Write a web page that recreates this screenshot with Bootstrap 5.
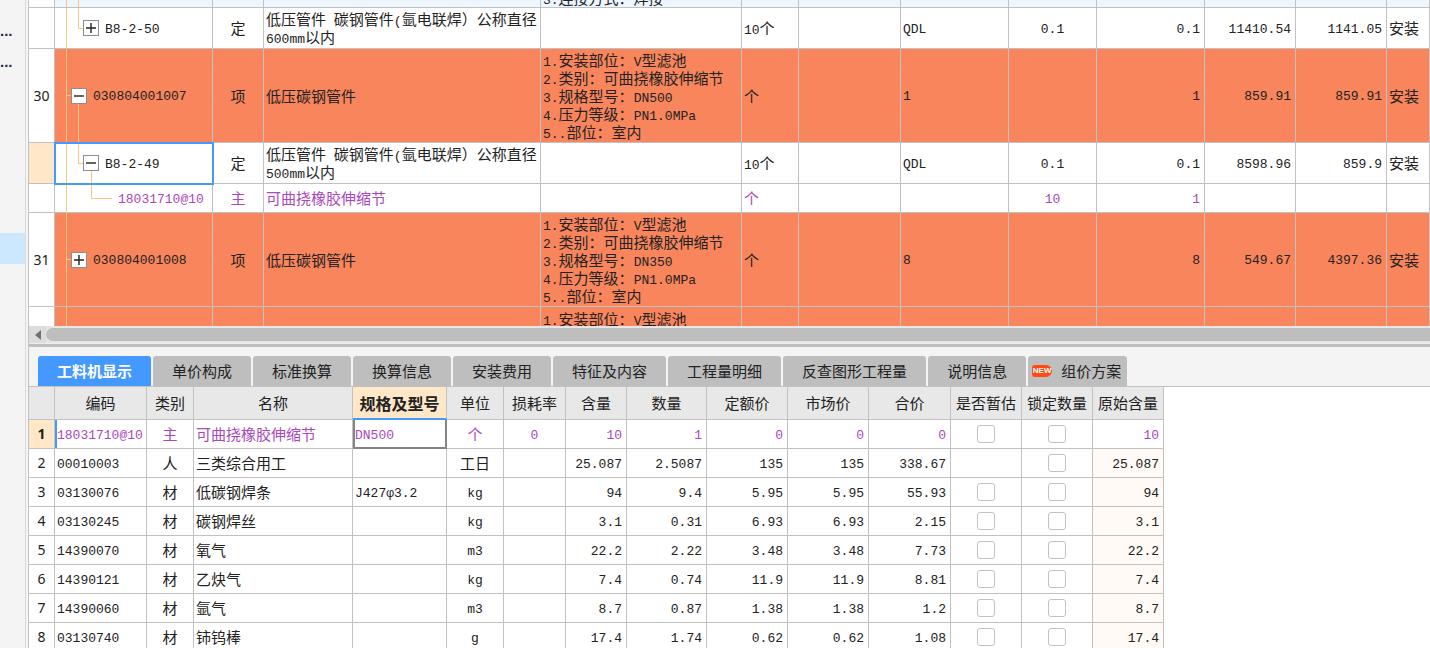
<!DOCTYPE html>
<html lang="zh-CN">
<head>
<meta charset="utf-8">
<meta name="viewport" content="width=device-width, initial-scale=1">
<title>工料机显示</title>
<link href="https://cdn.jsdelivr.net/npm/bootstrap@5.3.0/dist/css/bootstrap.min.css" rel="stylesheet">
<style>
:root{--line:#c1c1c1;--tree:#fdc680;--sel:#4399ff;--hot:#f9855c;--warm:#ffe7c7}
body{font-family:"Noto Sans CJK SC",sans-serif;font-size:15px;line-height:18px;color:#222;background:#fff}
.side{width:29px;flex:none;background:#f4f4f4;border-right:1px solid var(--line)}
.side ul{border-right:1px solid #dadada;width:26px;padding-top:16px}
.side li{height:31px;line-height:30px;overflow:hidden}
.side a{color:#1d2b50;display:block;font-weight:700;font-family:"Liberation Sans",sans-serif}
.side li.on{background:#cce8ff}
.la{font-family:"Liberation Mono",monospace;font-size:13px}
span.la{line-height:1px}
/* shared grid look */
.sheet{table-layout:fixed;border-collapse:separate;border-spacing:0}
.sheet td,.sheet th{border:solid var(--line);border-width:0 1px 1px 0;padding:0 2px;white-space:nowrap;overflow:hidden;vertical-align:middle}
.sheet .no{font-family:"Noto Sans",sans-serif;font-size:14px;text-align:center;padding:0;font-weight:400;background:#fff}
.sheet .no.cur{background:var(--warm)}
.own td{color:#ab47bc}
/* upper grid */
.r-a{height:41px}.r-b{height:94px}.r-c{height:29px}
.r-top{height:8px}.r-end{height:19px}
.r-top td{background:#edf5ff}
.sheet .r-end td,.sheet .r-end th{border-bottom:0}
.peek{height:7px;overflow:hidden}
.peek.up{display:flex;align-items:flex-end}
.peek.low{height:19px;padding-top:3px}
.hot td{background-color:var(--hot)}
.sheet td.tr{background-image:linear-gradient(var(--tree),var(--tree)),linear-gradient(var(--tree),var(--tree)),linear-gradient(var(--tree),var(--tree)),linear-gradient(var(--tree),var(--tree));background-repeat:no-repeat;background-position:11px 0,23px 0,23px 50%,36px 100%;background-size:1px 100%,0 0,0 0,0 0}
.sheet td.t-pass{background-size:1px 100%,1px 100%,0 0,0 0}
.sheet td.t-one{background-position:11px 0,11px 50%,23px 100%,0 0;background-size:1px 100%,6px 1px,0 0,0 0}
.sheet td.t-open{background-size:1px 100%,6px 1px,1px 50%,0 0}
.sheet td.t-two{background-size:1px 100%,1px 50%,6px 1px,0 0}
.sheet td.t-two.more{background-size:1px 100%,1px 50%,6px 1px,1px 50%}
.sheet td.t-three{background-position:11px 0,36px 0,36px 50%,0 0;background-size:1px 100%,1px 50%,21px 1px,0 0}
.node{display:flex;align-items:center;gap:6px}
.node .la{line-height:16px;padding-top:3px}
.lv1{padding-left:14px}.lv2{padding-left:26px}.lv3{padding-left:61px}
.tog{width:16px;height:16px;padding:0;border:1px solid #8e8e8e;background:#fff;display:flex;flex:none}
.tog svg{display:block}
.sheet td.picked{outline:2px solid var(--sel);outline-offset:-1px}
/* scroll strip */
.strip{height:17px;background:#e6e6e6}
.strip button{width:17px;border:0;padding:0;background:#dcdcdc;display:flex;align-items:center;justify-content:center}
.thumb{background:#bebebe;height:13px;border-radius:7px 0 0 7px}
.split{height:4px;background:#bfbfbf;border-top:1px solid #eee}
/* tabs */
.tabs{background:#f4f4f4;padding:9px 0 0 9px;gap:2px;border-bottom:1px solid var(--line)}
.tabs .nav-link{height:30px;padding:0 19px;color:#222;background:#bebebe;border:0;border-radius:3px 3px 0 0;line-height:30px;white-space:nowrap}
.tabs .nav-link.active{background:var(--sel);color:#fff;font-weight:700}
.tabs .nav-link.fresh{padding:0 6px 0 4px;display:flex;align-items:center;gap:9px}
.tag-new{width:20px;height:12px;background:#ff4a12;color:#fff;border-radius:3px 6px 6px 3px;font:700 8px/12px "Liberation Sans",sans-serif;text-align:center}
/* lower grid */
.low-grid{width:1135px}
.low-grid thead th{height:33px;background:#e8e8e8;text-align:center;font-weight:400;padding:0}
.low-grid thead th.cur{background:var(--warm);font-weight:700;font-size:16px;border-bottom:2px solid var(--sel)}
.low-grid tbody tr{height:29px}
.low-grid td:nth-last-child(1){background:#fffaf5}
.low-grid .own td:nth-last-child(1){background:#fff}
.low-grid .own td:nth-child(2){box-shadow:inset 2px 0 var(--sel)}
.low-grid td.edit{box-shadow:inset 2px 0 #858585,inset -1px -1px #858585;border-color:#858585}
.sheet td.n,.sheet td.la{font-family:"Liberation Mono",monospace;font-size:13px;padding-top:3px}
.sheet td.n{text-align:right;padding-right:4px}
.low-grid .form-check-input{width:18px;height:18px;margin:0;border:1px solid #c2c2c2;border-radius:3px;display:block;margin-inline:auto}
</style>
</head>
<body>
<div class="d-flex vh-100 overflow-hidden">
<nav class="side" aria-label="目录">
<ul class="list-unstyled mb-0 h-100"><li><a class="text-decoration-none" href="#">...</a></li><li><a class="text-decoration-none" href="#">...</a></li><li></li><li></li><li></li><li></li><li></li><li class="on"></li></ul>
</nav>
<main class="flex-grow-1 overflow-hidden">
<table class="sheet w-100">
<colgroup><col style="width:26px"><col style="width:158px"><col style="width:51px"><col style="width:277px"><col style="width:201px"><col style="width:57px"><col style="width:102px"><col style="width:108px"><col style="width:88px"><col style="width:108px"><col style="width:91px"><col style="width:91px"><col></colgroup>
<tbody>
<tr class="r-top"><th class="no"></th><td class="tr t-pass"></td><td></td><td></td><td><div class="peek up"><span><span class="la">3.</span>连接方式：焊接</span></div></td><td></td><td></td><td></td><td></td><td></td><td></td><td></td><td></td></tr>
<tr class="r-a"><th class="no"></th><td class="tr t-two"><div class="node lv2"><button class="tog" aria-label="展开"><svg width="14" height="14"><path d="M2 7h10M7 2v10" stroke="#222" stroke-width="1.4"/></svg></button><span class="la">B8-2-50</span></div></td><td class="text-center">定</td><td>低压管件<span class="la">&nbsp;</span>碳钢管件<span class="la">(</span>氩电联焊）公称直径<br><span class="la">600mm</span>以内</td><td></td><td><span class="la">10</span>个</td><td></td><td class="la">QDL</td><td class="la text-center">0.1</td><td class="n">0.1</td><td class="n">11410.54</td><td class="n">1141.05</td><td>安装</td></tr>
<tr class="r-b hot"><th class="no">30</th><td class="tr t-one t-open"><div class="node lv1"><button class="tog" aria-label="收起"><svg width="14" height="14"><path d="M2 7h10" stroke="#222" stroke-width="1.4"/></svg></button><span class="la">030804001007</span></div></td><td class="text-center">项</td><td>低压碳钢管件</td><td><span class="la">1.</span>安装部位：<span class="la">V</span>型滤池<br><span class="la">2.</span>类别：可曲挠橡胶伸缩节<br><span class="la">3.</span>规格型号：<span class="la">DN500</span><br><span class="la">4.</span>压力等级：<span class="la">PN1.0MPa</span><br><span class="la">5..</span>部位：室内</td><td>个</td><td></td><td class="la">1</td><td></td><td class="n">1</td><td class="n">859.91</td><td class="n">859.91</td><td>安装</td></tr>
<tr class="r-a"><th class="no cur"></th><td class="tr t-two more picked"><div class="node lv2"><button class="tog" aria-label="收起"><svg width="14" height="14"><path d="M2 7h10" stroke="#222" stroke-width="1.4"/></svg></button><span class="la">B8-2-49</span></div></td><td class="text-center">定</td><td>低压管件<span class="la">&nbsp;</span>碳钢管件<span class="la">(</span>氩电联焊）公称直径<br><span class="la">500mm</span>以内</td><td></td><td><span class="la">10</span>个</td><td></td><td class="la">QDL</td><td class="la text-center">0.1</td><td class="n">0.1</td><td class="n">8598.96</td><td class="n">859.9</td><td>安装</td></tr>
<tr class="r-c own"><th class="no"></th><td class="tr t-three"><div class="node lv3"><span class="la">18031710@10</span></div></td><td class="text-center">主</td><td>可曲挠橡胶伸缩节</td><td></td><td>个</td><td></td><td></td><td class="la text-center">10</td><td class="n">1</td><td></td><td></td><td></td></tr>
<tr class="r-b hot"><th class="no">31</th><td class="tr t-one"><div class="node lv1"><button class="tog" aria-label="展开"><svg width="14" height="14"><path d="M2 7h10M7 2v10" stroke="#222" stroke-width="1.4"/></svg></button><span class="la">030804001008</span></div></td><td class="text-center">项</td><td>低压碳钢管件</td><td><span class="la">1.</span>安装部位：<span class="la">V</span>型滤池<br><span class="la">2.</span>类别：可曲挠橡胶伸缩节<br><span class="la">3.</span>规格型号：<span class="la">DN350</span><br><span class="la">4.</span>压力等级：<span class="la">PN1.0MPa</span><br><span class="la">5..</span>部位：室内</td><td>个</td><td></td><td class="la">8</td><td></td><td class="n">8</td><td class="n">549.67</td><td class="n">4397.36</td><td>安装</td></tr>
<tr class="r-end hot"><th class="no"></th><td class="tr"></td><td></td><td></td><td><div class="peek low"><span class="la">1.</span>安装部位：<span class="la">V</span>型滤池</div></td><td></td><td></td><td></td><td></td><td></td><td></td><td></td><td></td></tr>
</tbody>
</table>
<div class="strip d-flex"><button class="align-self-stretch" aria-label="向左滚动"><svg width="6" height="10"><path d="M6 0v10L0 5z" fill="#6f6f78"/></svg></button><div class="thumb flex-grow-1 align-self-center"></div></div>
<div class="split"></div>
<div class="nav tabs flex-nowrap" role="tablist">
<button class="nav-link active" role="tab">工料机显示</button><button class="nav-link" role="tab">单价构成</button><button class="nav-link" role="tab">标准换算</button><button class="nav-link" role="tab">换算信息</button><button class="nav-link" role="tab">安装费用</button><button class="nav-link" role="tab">特征及内容</button><button class="nav-link" role="tab">工程量明细</button><button class="nav-link" role="tab">反查图形工程量</button><button class="nav-link" role="tab">说明信息</button><button class="nav-link fresh" role="tab"><span class="tag-new">NEW</span>组价方案</button>
</div>
<table class="sheet low-grid">
<colgroup><col style="width:26px"><col style="width:92px"><col style="width:47px"><col style="width:159px"><col style="width:94px"><col style="width:57px"><col style="width:62px"><col style="width:61px"><col style="width:80px"><col style="width:81px"><col style="width:81px"><col style="width:82px"><col style="width:71px"><col style="width:71px"><col style="width:71px"></colgroup>
<thead><tr><th></th><th>编码</th><th>类别</th><th>名称</th><th class="cur">规格及型号</th><th>单位</th><th>损耗率</th><th>含量</th><th>数量</th><th>定额价</th><th>市场价</th><th>合价</th><th>是否暂估</th><th>锁定数量</th><th>原始含量</th></tr></thead>
<tbody>
<tr class="own"><th class="no cur fw-bold">1</th><td class="la">18031710@10</td><td class="text-center">主</td><td>可曲挠橡胶伸缩节</td><td class="la edit">DN500</td><td class="text-center">个</td><td class="la text-center">0</td><td class="n">10</td><td class="n">1</td><td class="n">0</td><td class="n">0</td><td class="n">0</td><td><input class="form-check-input" type="checkbox" aria-label="是否暂估 1"></td><td><input class="form-check-input" type="checkbox" aria-label="锁定数量 1"></td><td class="n">10</td></tr>
<tr><th class="no">2</th><td class="la">00010003</td><td class="text-center">人</td><td>三类综合用工</td><td></td><td class="text-center">工日</td><td></td><td class="n">25.087</td><td class="n">2.5087</td><td class="n">135</td><td class="n">135</td><td class="n">338.67</td><td></td><td><input class="form-check-input" type="checkbox" aria-label="锁定数量 2"></td><td class="n">25.087</td></tr>
<tr><th class="no">3</th><td class="la">03130076</td><td class="text-center">材</td><td>低碳钢焊条</td><td class="la">J427φ3.2</td><td class="la text-center">kg</td><td></td><td class="n">94</td><td class="n">9.4</td><td class="n">5.95</td><td class="n">5.95</td><td class="n">55.93</td><td><input class="form-check-input" type="checkbox" aria-label="是否暂估 3"></td><td><input class="form-check-input" type="checkbox" aria-label="锁定数量 3"></td><td class="n">94</td></tr>
<tr><th class="no">4</th><td class="la">03130245</td><td class="text-center">材</td><td>碳钢焊丝</td><td></td><td class="la text-center">kg</td><td></td><td class="n">3.1</td><td class="n">0.31</td><td class="n">6.93</td><td class="n">6.93</td><td class="n">2.15</td><td><input class="form-check-input" type="checkbox" aria-label="是否暂估 4"></td><td><input class="form-check-input" type="checkbox" aria-label="锁定数量 4"></td><td class="n">3.1</td></tr>
<tr><th class="no">5</th><td class="la">14390070</td><td class="text-center">材</td><td>氧气</td><td></td><td class="la text-center">m3</td><td></td><td class="n">22.2</td><td class="n">2.22</td><td class="n">3.48</td><td class="n">3.48</td><td class="n">7.73</td><td><input class="form-check-input" type="checkbox" aria-label="是否暂估 5"></td><td><input class="form-check-input" type="checkbox" aria-label="锁定数量 5"></td><td class="n">22.2</td></tr>
<tr><th class="no">6</th><td class="la">14390121</td><td class="text-center">材</td><td>乙炔气</td><td></td><td class="la text-center">kg</td><td></td><td class="n">7.4</td><td class="n">0.74</td><td class="n">11.9</td><td class="n">11.9</td><td class="n">8.81</td><td><input class="form-check-input" type="checkbox" aria-label="是否暂估 6"></td><td><input class="form-check-input" type="checkbox" aria-label="锁定数量 6"></td><td class="n">7.4</td></tr>
<tr><th class="no">7</th><td class="la">14390060</td><td class="text-center">材</td><td>氩气</td><td></td><td class="la text-center">m3</td><td></td><td class="n">8.7</td><td class="n">0.87</td><td class="n">1.38</td><td class="n">1.38</td><td class="n">1.2</td><td><input class="form-check-input" type="checkbox" aria-label="是否暂估 7"></td><td><input class="form-check-input" type="checkbox" aria-label="锁定数量 7"></td><td class="n">8.7</td></tr>
<tr><th class="no">8</th><td class="la">03130740</td><td class="text-center">材</td><td>铈钨棒</td><td></td><td class="la text-center">g</td><td></td><td class="n">17.4</td><td class="n">1.74</td><td class="n">0.62</td><td class="n">0.62</td><td class="n">1.08</td><td><input class="form-check-input" type="checkbox" aria-label="是否暂估 8"></td><td><input class="form-check-input" type="checkbox" aria-label="锁定数量 8"></td><td class="n">17.4</td></tr>
</tbody>
</table>
</main>
</div>
<script src="https://cdn.jsdelivr.net/npm/bootstrap@5.3.0/dist/js/bootstrap.bundle.min.js"></script>
</body>
</html>
